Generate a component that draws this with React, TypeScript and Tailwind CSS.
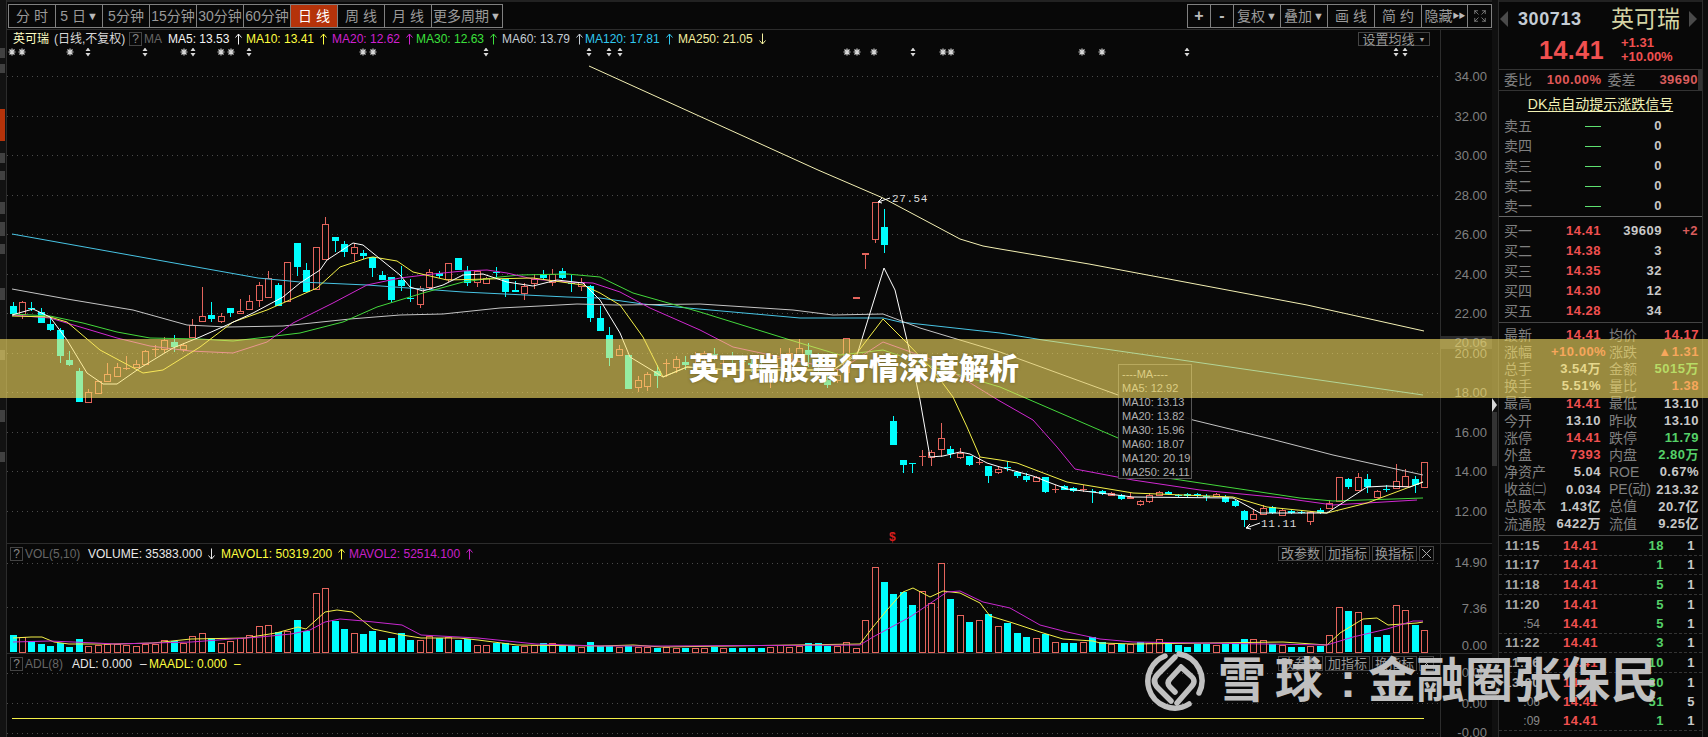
import { Expand } from "lucide-react";

type Candle = [number, number, number, number, number];

const RED = "#e4645c";
const CYAN = "#00ffff";

// kind (0 red, 1 cyan), high, body top, body bottom, low — page pixels
const candles: Candle[] = [
  [1, 302, 306, 314, 316], [0, 301, 302, 314, 319], [1, 302, 308, 308, 311], [1, 308, 312, 323, 323], [1, 317, 324, 330, 331],
  [1, 328, 330, 356, 363], [1, 351, 360, 365, 366], [1, 368, 371, 402, 402], [0, 389, 392, 402, 402], [0, 381, 381, 393, 393],
  [0, 363, 374, 381, 382], [0, 363, 367, 376, 377], [0, 356, 368, 368, 370], [0, 360, 364, 367, 368], [0, 350, 351, 364, 364],
  [0, 345, 349, 349, 357], [0, 337, 340, 349, 353], [1, 335, 342, 347, 352], [0, 343, 345, 349, 352], [0, 319, 325, 337, 337],
  [0, 287, 316, 321, 322], [1, 302, 315, 319, 322], [0, 313, 316, 321, 323], [1, 308, 308, 313, 317], [0, 299, 311, 313, 313],
  [0, 295, 301, 309, 310], [0, 282, 285, 300, 307], [0, 271, 278, 297, 298], [1, 283, 285, 306, 306], [0, 262, 262, 301, 301],
  [1, 243, 243, 267, 276], [1, 263, 270, 292, 292], [0, 247, 247, 289, 289], [0, 217, 224, 259, 259], [1, 237, 237, 241, 252],
  [1, 241, 244, 252, 257], [0, 243, 247, 253, 261], [1, 250, 253, 256, 259], [1, 257, 257, 268, 277], [1, 271, 275, 280, 280],
  [1, 277, 277, 300, 302], [1, 266, 280, 286, 291], [1, 279, 298, 298, 302], [0, 286, 288, 304, 308], [0, 269, 272, 287, 290],
  [1, 271, 273, 276, 278], [0, 263, 263, 279, 282], [1, 258, 258, 270, 270], [1, 266, 271, 283, 286], [0, 270, 271, 282, 287],
  [0, 277, 278, 283, 284], [1, 267, 272, 272, 278], [1, 279, 279, 292, 297], [1, 281, 290, 292, 292], [0, 283, 286, 293, 300],
  [0, 274, 279, 283, 289], [1, 270, 274, 278, 280], [0, 269, 274, 282, 286], [1, 268, 271, 278, 279], [1, 275, 283, 283, 292],
  [0, 278, 282, 286, 291], [1, 285, 286, 318, 322], [1, 306, 318, 331, 331], [1, 327, 335, 358, 366], [0, 345, 349, 355, 356],
  [1, 355, 355, 389, 389], [0, 376, 380, 387, 392], [0, 372, 374, 386, 391], [1, 365, 371, 376, 388], [0, 359, 363, 363, 377],
  [0, 356, 359, 367, 373], [1, 356, 362, 365, 370], [0, 352, 358, 358, 368], [0, 351, 353, 357, 364], [1, 348, 354, 354, 360],
  [0, 358, 363, 363, 372], [1, 352, 357, 357, 366], [1, 355, 361, 361, 370], [1, 358, 363, 365, 372], [1, 360, 366, 366, 376],
  [0, 366, 370, 370, 388], [0, 348, 358, 367, 368], [0, 348, 353, 363, 370], [0, 339, 348, 361, 362], [1, 343, 350, 355, 367],
  [1, 353, 361, 363, 372], [1, 375, 380, 385, 388], [0, 370, 375, 380, 383], [0, 338, 338, 372, 372], [0, 297, 297, 297, 297],
  [0, 253, 253, 253, 269], [0, 202, 202, 239, 243], [1, 209, 227, 245, 253], [1, 416, 421, 445, 445], [1, 460, 460, 465, 473],
  [1, 463, 463, 463, 473], [0, 450, 456, 456, 466], [0, 450, 452, 457, 466], [0, 423, 438, 449, 457], [1, 446, 449, 454, 458],
  [0, 448, 453, 457, 459], [1, 456, 456, 465, 466], [0, 457, 462, 462, 465], [1, 466, 466, 476, 483], [0, 467, 469, 472, 474],
  [1, 461, 467, 467, 471], [1, 471, 472, 476, 478], [1, 473, 476, 480, 482], [0, 476, 477, 481, 482], [1, 477, 477, 492, 493],
  [0, 485, 489, 489, 493], [1, 485, 486, 490, 490], [1, 487, 488, 491, 492], [0, 485, 489, 489, 492], [1, 489, 491, 491, 503],
  [1, 490, 491, 494, 495], [0, 492, 493, 495, 496], [1, 494, 495, 499, 500], [0, 493, 497, 498, 499], [0, 500, 501, 504, 506],
  [0, 493, 495, 501, 503], [0, 491, 492, 495, 496], [1, 491, 492, 494, 495], [1, 494, 495, 495, 497], [1, 493, 494, 496, 497],
  [1, 493, 494, 496, 497], [1, 494, 496, 496, 501], [0, 493, 494, 496, 497], [1, 495, 497, 502, 503], [1, 500, 501, 506, 507],
  [1, 510, 511, 520, 527], [0, 509, 514, 519, 520], [0, 505, 508, 514, 515], [1, 506, 507, 513, 514], [0, 509, 510, 515, 516],
  [1, 510, 511, 513, 514], [1, 511, 512, 513, 514], [0, 511, 512, 521, 525], [1, 508, 510, 513, 514], [0, 500, 503, 508, 509],
  [0, 477, 477, 501, 501], [1, 478, 479, 487, 489], [0, 473, 477, 490, 491], [1, 474, 479, 487, 493], [0, 490, 491, 497, 498],
  [1, 485, 489, 489, 492], [0, 464, 481, 488, 489], [0, 469, 476, 486, 487], [1, 476, 479, 485, 493], [0, 462, 462, 487, 487],
];

const volumes: number[] = [
  635, 637, 641, 644, 646, 643, 647, 639, 646, 645, 644, 644, 645, 646, 644, 644, 640, 641, 643, 636,
  633, 638, 643, 641, 638, 635, 626, 625, 632, 631, 620, 631, 593, 588, 621, 629, 633, 634, 631, 640,
  638, 633, 640, 640, 636, 638, 637, 640, 639, 645, 645, 643, 643, 646, 646, 645, 643, 643, 645, 645,
  647, 642, 646, 646, 647, 646, 647, 647, 648, 647, 648, 648, 648, 648, 647, 648, 648, 648, 648, 648,
  647, 645, 647, 646, 643, 643, 646, 646, 642, 648, 620, 567, 582, 594, 592, 605, 591, 603, 563, 599,
  615, 622, 620, 614, 626, 623, 633, 637, 638, 634, 642, 643, 643, 642, 637, 642, 644, 644, 644, 642,
  643, 639, 643, 645, 647, 644, 644, 645, 644, 644, 639, 639, 640, 644, 645, 647, 647, 646, 646, 635,
  607, 611, 612, 625, 637, 635, 605, 610, 625, 630,
];

// a few volume bars differ in colour from the candle of the same day
const volKind = (i: number) => (i === 23 || i === 119 || i === 144 ? (i === 23 ? 0 : 1) : candles[i][0]);

const cx = (i: number) => Math.round(12.5 + 9.473 * i);

const ma5 = "12,315 33,309 50,317 67,340 87,373 103,384 117,384 140,368 173,348 200,337 227,325 253,313 283,297 300,283 320,270 327,260 353,243 363,245 400,275 410,287 423,291 443,285 463,275 483,274 507,282 533,286 557,280 583,283 600,300 620,333 630,357 663,377 687,367 730,370 833,370 857,355 870,313 884,268 895,290 910,353 920,400 930,457 943,456 960,452 970,454 987,463 1000,467 1033,476 1048,482 1067,489 1133,497 1233,498 1260,513 1327,513 1367,487 1387,486 1410,487 1423,482";
const ma10 = "12,316 50,317 67,322 100,350 143,373 163,370 200,347 233,322 267,310 317,288 340,267 367,258 373,257 397,261 413,272 447,280 487,279 533,278 583,285 600,293 620,305 643,337 663,377 687,367 730,370 833,370 857,353 883,319 907,343 933,370 953,397 967,427 980,457 1000,460 1017,463 1067,482 1133,493 1233,497 1267,507 1327,513 1367,503 1423,482";
const ma20 = "12,315 50,318 117,338 150,346 190,351 233,353 267,342 293,323 333,303 367,285 400,278 433,274 463,271 487,270 507,273 533,279 567,282 593,283 620,292 650,308 700,330 733,347 840,370 883,342 933,360 998,400 1033,420 1057,447 1075,469 1133,480 1200,490 1283,498 1333,505 1417,500";
const ma30 = "12,314 50,316 83,323 117,332 150,338 200,339 233,341 267,337 300,333 343,322 377,307 423,293 463,282 500,277 520,275 567,274 600,277 633,293 700,312 800,343 840,355 883,350 933,367 1000,387 1118,438 1167,478 1300,498 1333,501 1423,498";
const ma60 = "12,289 67,299 133,310 187,325 227,327 283,326 350,319 400,315 443,314 500,308 540,306 577,304 617,305 700,304 793,310 833,315 883,314 920,328 1000,352 1118,395 1193,420 1267,438 1333,455 1423,475";
const ma120 = "12,234 258,278 300,282 367,285 463,292 567,297 600,298 643,304 800,318 883,318 900,322 1000,333 1043,340 1423,395";
const ma250 = "589,66 818,170 883,198 930,223 960,239 983,246 1000,249 1089,264 1307,305 1424,331";
const volMa1 = "13,638 31,637 42,637 54,642 69,644 115,644 153,643 191,639 245,638 276,633 298,627 306,629 325,612 337,610 352,612 373,629 402,635 421,638 459,638 478,640 517,645 600,646 633,645 662,647 860,644 873,627 887,610 903,592 913,588 930,597 943,591 960,593 980,603 990,616 1013,623 1040,632 1063,639 1093,641 1100,643 1133,644 1283,642 1327,645 1340,633 1363,619 1377,618 1388,625 1417,623 1423,622";
const volMa2 = "13,642 50,641 96,643 115,644 191,642 260,637 291,634 310,630 325,622 340,619 364,621 402,625 421,635 478,638 536,644 600,646 662,646 860,645 873,637 910,617 947,592 960,591 983,602 1010,608 1040,625 1067,632 1100,639 1133,642 1267,644 1327,645 1353,637 1387,629 1400,625 1413,621 1423,621";

const stars = [12, 22, 70, 221, 231, 184, 363, 373, 847, 857, 874, 943, 951, 1082, 1102];
const flags = [88, 145, 193, 249, 486, 589, 609, 620, 913, 1187, 1396, 1405];

const gridK = [34, 32, 30, 28, 26, 24, 22, 20, 18, 16, 14, 12].map((p) => 510.5 - (p - 12) * 19.75);

function Arrow({ color, down }: { color: string; down?: boolean }) {
  return (
    <svg width="7" height="12" viewBox="0 0 7 12" fill="none" stroke={color} strokeWidth="1" className="shrink-0">
      {down ? <path d="M3.5 0.5V11M0.5 7.5L3.5 11L6.5 7.5" /> : <path d="M3.5 11.5V1M0.5 4.5L3.5 1L6.5 4.5" />}
    </svg>
  );
}

function ToolButton({ children, w, active }: { children: React.ReactNode; w: string; active?: boolean }) {
  return (
    <div
      className={`flex h-full ${w} items-center justify-center border-r border-[#808080] text-[14px] whitespace-nowrap last:border-r-0 ${
        active ? "bg-[#b5330a] text-white" : "text-[#9a9a9a]"
      }`}
    >
      {children}
    </div>
  );
}

function Tri() {
  return <span className="ml-[1px] text-[11px] leading-none text-[#b8b8b8]">▼</span>;
}

function Toolbar() {
  return (
    <div className="flex h-[29px] items-start justify-between border-t-2 border-[#222] pt-[2px] pl-px">
      <div className="flex h-[24px] border border-[#808080]">
        <ToolButton w="w-[47px]">分&nbsp;时</ToolButton>
        <ToolButton w="w-[47px]">5&nbsp;日<Tri /></ToolButton>
        <ToolButton w="w-[47px]">5分钟</ToolButton>
        <ToolButton w="w-[47px]">15分钟</ToolButton>
        <ToolButton w="w-[47px]">30分钟</ToolButton>
        <ToolButton w="w-[47px]">60分钟</ToolButton>
        <ToolButton w="w-[47px]" active>日&nbsp;线</ToolButton>
        <ToolButton w="w-[47px]">周&nbsp;线</ToolButton>
        <ToolButton w="w-[47px]">月&nbsp;线</ToolButton>
        <ToolButton w="w-[70px]">更多周期<Tri /></ToolButton>
      </div>
      <div className="flex h-[24px] border border-[#808080]">
        <ToolButton w="w-[23px]"><span className="text-[16px] font-bold text-[#bbb]">+</span></ToolButton>
        <ToolButton w="w-[23px]"><span className="text-[16px] font-bold text-[#bbb]">-</span></ToolButton>
        <ToolButton w="w-[47px]">复权<Tri /></ToolButton>
        <ToolButton w="w-[47px]">叠加<Tri /></ToolButton>
        <ToolButton w="w-[47px]">画&nbsp;线</ToolButton>
        <ToolButton w="w-[47px]">简&nbsp;约</ToolButton>
        <ToolButton w="w-[46px]">隐藏<span className="text-[7px] tracking-[-1px] text-[#bbb]">▶▶</span></ToolButton>
        <ToolButton w="w-[23px]"><Expand size={14} strokeWidth={1.25} color="#999" /></ToolButton>
      </div>
    </div>
  );
}

function HelpBox() {
  return <span className="flex h-[14px] w-[13px] items-center justify-center border border-[#444] text-[12px] text-[#888]">?</span>;
}

function MaLabel({ w, color, children, down }: { w: string; color: string; children: string; down?: boolean }) {
  return (
    <span className={`flex ${w} items-center gap-[6px] text-[12px] whitespace-nowrap`} style={{ color }}>
      {children}
      <Arrow color={color} down={down} />
    </span>
  );
}

function Polyline({ points, color }: { points: string; color: string }) {
  return <polyline points={points} fill="none" stroke={color} strokeWidth={1} strokeLinejoin="round" />;
}

function Star({ x }: { x: number }) {
  return (
    <g stroke="#d8d8d8" strokeWidth="1.2">
      <path d={`M${x - 3.5} 52H${x + 3.5}M${x} 48.5V55.5M${x - 2.5} 49.5L${x + 2.5} 54.5M${x + 2.5} 49.5L${x - 2.5} 54.5`} />
    </g>
  );
}

function Flag({ x }: { x: number }) {
  return <path d={`M${x} 47.5L${x + 2.5} 51H${x - 2.5}ZM${x} 56.5L${x + 2.5} 53H${x - 2.5}Z`} fill="#d8d8d8" />;
}

function CandleMark({ c, i }: { c: Candle; i: number }) {
  const [kind, high, top, bot, low] = c;
  const x = cx(i);
  const color = kind ? CYAN : RED;
  return (
    <g shapeRendering="crispEdges">
      <line x1={x + 0.5} x2={x + 0.5} y1={high} y2={low} stroke={color} />
      {bot - top < 1 ? (
        <line x1={x - 3} x2={x + 4} y1={top + 0.5} y2={top + 0.5} stroke={color} strokeWidth={i === 89 || i === 90 ? 2 : 1} />
      ) : kind ? (
        <rect x={x - 3} y={top} width={7} height={bot - top} fill={CYAN} />
      ) : (
        <rect x={x - 3 + 0.5} y={top + 0.5} width={6} height={bot - top} fill="#080808" stroke={RED} />
      )}
    </g>
  );
}

function PriceChart() {
  return (
    <svg width="1433" height="495" viewBox="7 48 1433 495" className="block">
      {gridK.map((y) => (
        <line key={y} x1="7" x2="1440" y1={Math.round(y) + 0.5} y2={Math.round(y) + 0.5} stroke="#4a4a4a" strokeDasharray="1 4" />
      ))}
      {stars.map((x) => <Star key={x} x={x} />)}
      {flags.map((x) => <Flag key={x} x={x} />)}
      {candles.map((c, i) => <CandleMark key={i} c={c} i={i} />)}
      <Polyline points={ma250} color="#f4f0b4" />
      <Polyline points={ma120} color="#48c4e4" />
      <Polyline points={ma60} color="#c4c4c4" />
      <Polyline points={ma30} color="#44d83c" />
      <Polyline points={ma20} color="#d028d0" />
      <Polyline points={ma10} color="#f4f048" />
      <Polyline points={ma5} color="#ffffff" />
      <path d="M890 198L878 202M878 202L882 198M878 202L882 203M1260 523L1246 528M1246 528L1250 524M1246 528L1251 529" stroke="#fff" fill="none" />
      <text x="892" y="202" fill="#dcdcdc" fontSize="11" letterSpacing="0.6" fontFamily="'Liberation Mono', monospace">27.54</text>
      <text x="1261" y="527" fill="#dcdcdc" fontSize="11" letterSpacing="0.6" fontFamily="'Liberation Mono', monospace">11.11</text>
      <text x="889" y="541" fill="#d81e1e" fontSize="12" fontWeight="bold">$</text>
    </svg>
  );
}

function VolumeChart() {
  return (
    <svg width="1433" height="90" viewBox="7 563 1433 90" className="block">
      {[563.5, 607.5].map((y) => (
        <line key={y} x1="7" x2="1440" y1={y} y2={y} stroke="#4a4a4a" strokeDasharray="1 4" />
      ))}
      {volumes.map((top, i) =>
        volKind(i) ? (
          <rect key={i} x={cx(i) - 3} y={top} width={7} height={652 - top} fill={CYAN} shapeRendering="crispEdges" />
        ) : (
          <rect key={i} x={cx(i) - 2.5} y={top + 0.5} width={6} height={652 - top - 0.5} fill="#080808" stroke={RED} shapeRendering="crispEdges" />
        ),
      )}
      <Polyline points={volMa1} color="#f4f048" />
      <Polyline points={volMa2} color="#c828d0" />
    </svg>
  );
}

function AdlChart() {
  return (
    <svg width="1433" height="64" viewBox="7 673 1433 64" className="block">
      {[673.5, 703.5, 733.5].map((y) => (
        <line key={y} x1="7" x2="1440" y1={y} y2={y} stroke="#4a4a4a" strokeDasharray="1 4" />
      ))}
      <line x1="12" x2="1424" y1="718.5" y2="718.5" stroke="#f4f048" />
    </svg>
  );
}

function MiniButtons() {
  return (
    <div className="flex h-[15px] gap-[2px] text-[13px] leading-none text-[#999]">
      <span className="flex w-[45px] items-center justify-center border border-[#444]">改参数</span>
      <span className="flex w-[45px] items-center justify-center border border-[#444]">加指标</span>
      <span className="flex w-[45px] items-center justify-center border border-[#444]">换指标</span>
      <span className="flex w-[15px] items-center justify-center border border-[#444] text-[#aaa]">
        <svg width="9" height="9" viewBox="0 0 9 9" stroke="currentColor"><path d="M0 0L9 9M9 0L0 9" /></svg>
      </span>
    </div>
  );
}

function AxisTick({ children }: { children: string }) {
  return <div className="flex h-[39.5px] items-center justify-end pr-[5px] text-[13px] text-[#808080]">{children}</div>;
}

function KPanel() {
  const ticks = ["34.00", "32.00", "30.00", "28.00", "26.00", "24.00", "22.00", "20.00", "18.00", "16.00", "14.00", "12.00"];
  return (
    <section className="flex h-[514px] border-t border-[#2c2c2c]">
      <div className="relative w-[1433px]">
        <div className="flex h-[18px] items-center pl-[6px] text-[12px]">
          <span className="w-[41px] text-[#ffffc4]">英可瑞</span>
          <span className="w-[75px] text-[#d8d8d8]">(日线,不复权)</span>
          <HelpBox />
          <span className="ml-[2px] w-[24px] text-[#666]">MA</span>
          <MaLabel w="w-[78px]" color="#f4f4f4">MA5: 13.53</MaLabel>
          <MaLabel w="w-[86px]" color="#ffff40">MA10: 13.41</MaLabel>
          <MaLabel w="w-[84px]" color="#d020d0">MA20: 12.62</MaLabel>
          <MaLabel w="w-[86px]" color="#3ce03c">MA30: 12.63</MaLabel>
          <MaLabel w="w-[83px]" color="#c4ccd4">MA60: 13.79</MaLabel>
          <MaLabel w="w-[93px]" color="#30c8f0">MA120: 17.81</MaLabel>
          <MaLabel w="w-[90px]" color="#f4f0a0" down>MA250: 21.05</MaLabel>
          <span className="ml-auto mr-[10px] flex h-[14px] w-[72px] items-center justify-center gap-[4px] border border-[#444] text-[13px] leading-none text-[#999]">
            设置均线<span className="text-[7px] text-[#aaa]">▼</span>
          </span>
        </div>
        <PriceChart />
        <div className="absolute top-[334px] left-[1111px] flex h-[115px] w-[74px] flex-col border border-[#555] bg-[#0a0a0a]/95 pt-[2px] pl-[3px] text-[11px] leading-[14px] text-[#b0b0b0]">
          <span>----MA----</span>
          <span>MA5: 12.92</span>
          <span>MA10: 13.13</span>
          <span>MA20: 13.82</span>
          <span>MA30: 15.96</span>
          <span>MA60: 18.07</span>
          <span>MA120: 20.19</span>
          <span>MA250: 24.11</span>
        </div>
      </div>
      <div className="relative w-[52px] border-l border-[#2c2c2c] pt-[27px]">
        {ticks.map((t) => <AxisTick key={t}>{t}</AxisTick>)}
        <span className="absolute top-[306px] left-0 flex h-[13px] w-[51px] items-center justify-end bg-[#2c2c2c] pr-[5px] text-[13px] text-[#808080]">20.06</span>
      </div>
    </section>
  );
}

function VolPanel() {
  return (
    <section className="flex h-[110px] border-t border-[#2c2c2c]">
      <div className="w-[1433px]">
        <div className="flex h-[19px] items-center pl-[3px] text-[12px]">
          <HelpBox />
          <span className="ml-[2px] w-[63px] text-[#666]">VOL(5,10)</span>
          <span className="flex w-[133px] items-center gap-[6px] text-[#e8e8e8]">VOLUME: 35383.000<Arrow color="#e8e8e8" down /></span>
          <span className="flex w-[128px] items-center gap-[6px] text-[#ffff40]">MAVOL1: 50319.200<Arrow color="#ffff40" /></span>
          <span className="flex items-center gap-[6px] text-[#c820c8]">MAVOL2: 52514.100<Arrow color="#c820c8" /></span>
          <span className="mr-[6px] ml-auto"><MiniButtons /></span>
        </div>
        <VolumeChart />
      </div>
      <div className="flex w-[52px] flex-col items-end border-l border-[#2c2c2c] pr-[5px] text-[13px] leading-[16px] text-[#808080]">
        <span className="mt-[11px]">14.90</span>
        <span className="mt-[30px]">7.36</span>
        <span className="mt-[21px]">0.00</span>
      </div>
    </section>
  );
}

function AdlPanel() {
  return (
    <section className="flex h-[84px] border-t border-[#2c2c2c]">
      <div className="w-[1433px]">
        <div className="flex h-[19px] items-center pl-[3px] text-[12px]">
          <HelpBox />
          <span className="ml-[2px] w-[47px] text-[#666]">ADL(8)</span>
          <span className="w-[68px] text-[#e8e8e8]">ADL: 0.000</span>
          <span className="w-[9px] text-[#e8e8e8]">–</span>
          <span className="w-[85px] text-[#ffff40]">MAADL: 0.000</span>
          <span className="text-[#ffff40]">–</span>
          <span className="mr-[6px] ml-auto"><MiniButtons /></span>
        </div>
        <AdlChart />
      </div>
      <div className="flex w-[52px] flex-col items-end border-l border-[#2c2c2c] pr-[5px] text-[13px] leading-[16px] text-[#808080]">
        <span className="mt-[11px]">0.00</span>
        <span className="mt-[15px]">0.00</span>
        <span className="mt-[13px]">-0.00</span>
      </div>
    </section>
  );
}

const num = "font-bold text-[13px] tracking-[0.5px]";
const white = "text-[#c8c8c8]";
const red = "text-[#f05050]";
const green = "text-[#55d068]";

function BookRow({ label, price, vol, delta }: { label: string; price?: string; vol: string; delta?: string }) {
  return (
    <div className="flex h-[20px] items-center">
      <span className="w-[38px] text-[14px] text-[#808080]">{label}</span>
      <span className={`flex w-[59px] justify-end ${num} ${red}`}>
        {price ?? <span className="h-px w-[16px] bg-[#5ee070]" />}
      </span>
      <span className={`w-[61px] text-right ${num} ${white}`}>{vol}</span>
      {delta && <span className={`w-[36px] text-right ${num} text-[#d85c5c]`}>{delta}</span>}
    </div>
  );
}

type Stat = [string, string, string, string, string, string];

const stats: Stat[] = [
  ["最新", "14.41", red, "均价", "14.17", red],
  ["涨幅", "+10.00%", red, "涨跌", "▲1.31", red],
  ["总手", "3.54万", white, "金额", "5015万", green],
  ["换手", "5.51%", white, "量比", "1.38", red],
  ["最高", "14.41", red, "最低", "13.10", white],
  ["今开", "13.10", white, "昨收", "13.10", white],
  ["涨停", "14.41", red, "跌停", "11.79", green],
  ["外盘", "7393", red, "内盘", "2.80万", green],
  ["净资产", "5.04", white, "ROE", "0.67%", white],
  ["收益㈡", "0.034", white, "PE(动)", "213.32", white],
  ["总股本", "1.43亿", white, "总值", "20.7亿", white],
  ["流通股", "6422万", white, "流值", "9.25亿", white],
];

type Trade = [string, string, string, boolean];

const trades: Trade[] = [
  ["11:15", "18", "1", true],
  ["11:17", "1", "1", true],
  ["11:18", "5", "1", true],
  ["11:20", "5", "1", false],
  [":54", "5", "1", true],
  ["11:22", "3", "1", true],
  ["11:26", "10", "1", true],
  ["13:00", "30", "1", false],
  [":06", "51", "5", false],
  [":09", "1", "1", true],
];

function QuotePanel() {
  return (
    <aside className="flex h-[737px] w-[205px] flex-col overflow-hidden border-x border-[#2c2c2c] *:shrink-0">
      <div className="h-[69px] border-t-2 border-[#222]">
        <div className="flex h-[34px] items-center pl-[1px]">
          <svg width="8" height="16" viewBox="0 0 8 16" fill="#4a4a4a"><path d="M8 0V16L0 8Z" /></svg>
          <span className="ml-[10px] w-[93px] text-[18px] font-bold tracking-[0.6px] text-[#c4ccd4]">300713</span>
          <span className="w-[78px] text-[23px] leading-none text-[#d4d4a4]">英可瑞</span>
          <svg width="8" height="16" viewBox="0 0 8 16" fill="#4a4a4a"><path d="M0 0V16L8 8Z" /></svg>
        </div>
        <div className="flex items-center pl-[40px]">
          <span className="w-[82px] text-[25px] leading-none font-bold tracking-[0.5px] text-[#f05050]">14.41</span>
          <div className="flex flex-col text-[13px] leading-[14px] font-bold text-[#f05050]">
            <span>+1.31</span>
            <span>+10.00%</span>
          </div>
        </div>
      </div>
      <div className="flex h-[22px] items-center border-y border-[#333] pl-[5px]">
        <span className="w-[43px] text-[14px] text-[#808080]">委比</span>
        <span className={`w-[56px] ${num} text-[#e05858]`}>100.00%</span>
        <span className="ml-[5px] w-[42px] text-[14px] text-[#808080]">委差</span>
        <span className={`w-[49px] text-right ${num} text-[#d85c5c]`}>39690</span>
        <span className="ml-auto h-full w-[4px] bg-[#333]" />
      </div>
      <div className="flex h-[25px] items-center justify-center text-[14px] leading-none text-[#f0f0b4] underline underline-offset-2">
        DK点自动提示涨跌信号
      </div>
      <div className="border-b border-[#666] pl-[5px]">
        <BookRow label="卖五" vol="0" />
        <BookRow label="卖四" vol="0" />
        <BookRow label="卖三" vol="0" />
        <BookRow label="卖二" vol="0" />
        <BookRow label="卖一" vol="0" />
      </div>
      <div className="mt-[4px] border-b border-[#444] pb-px pl-[5px]">
        <BookRow label="买一" price="14.41" vol="39609" delta="+2" />
        <BookRow label="买二" price="14.38" vol="3" />
        <BookRow label="买三" price="14.35" vol="32" />
        <BookRow label="买四" price="14.30" vol="12" />
        <BookRow label="买五" price="14.28" vol="34" />
      </div>
      <div className="mt-[3px] flex flex-col pl-[5px]">
        {stats.map(([l1, v1, c1, l2, v2, c2]) => (
          <div key={l1} className="flex h-[17.2px] items-center">
            <span className="w-[47px] text-[14px] leading-none whitespace-nowrap text-[#808080]">{l1}</span>
            <span className={`w-[50px] text-right ${num} ${c1} whitespace-nowrap`}>{v1}</span>
            <span className="ml-[8px] w-[38px] text-[14px] leading-none whitespace-nowrap text-[#808080]">{l2}</span>
            <span className={`w-[52px] text-right ${num} ${c2} whitespace-nowrap`}>{v2}</span>
          </div>
        ))}
      </div>
      <div className="mt-[3px] flex flex-col border-t border-[#444]">
        {trades.map(([t, v, n, dash]) => (
          <div key={t} className={`flex h-[19.5px] items-center pl-[5px] ${dash ? "border-b border-dashed border-[#333]" : ""}`}>
            <span className={`w-[36px] text-right ${t.length > 3 ? `${num} text-[#a8a8a8]` : "text-[12px] text-[#888]"}`}>{t}</span>
            <span className={`ml-[23px] w-[35px] ${num} ${red}`}>14.41</span>
            <span className={`w-[66px] text-right ${num} ${green}`}>{v}</span>
            <span className={`w-[31px] text-right ${num} ${white}`}>{n}</span>
          </div>
        ))}
      </div>
    </aside>
  );
}

// the window edge cuts the vertical tabs to a sliver, so only their ticks show
function SideTab({ h, mt, active }: { h: string; mt: string; active?: boolean }) {
  return <div className={`${h} ${mt} w-[5px] ${active ? "bg-[#b5330a]" : "bg-[#555]/70"}`} />;
}

function LeftStrip() {
  return (
    <div className="flex w-[7px] flex-col border-r border-[#2c2c2c] bg-[#121212]">
      <SideTab h="h-[10px]" mt="mt-[48px]" />
      <SideTab h="h-[9px]" mt="mt-[6px]" />
      <SideTab h="h-[32px]" mt="mt-[36px]" active />
      <SideTab h="h-[10px]" mt="mt-[12px]" />
      <SideTab h="h-[9px]" mt="mt-[8px]" />
      <SideTab h="h-[12px]" mt="mt-[22px]" />
      <SideTab h="h-[14px]" mt="mt-[8px]" />
      <SideTab h="h-[10px]" mt="mt-[8px]" />
      <SideTab h="h-[12px]" mt="mt-[34px]" />
      <SideTab h="h-[10px]" mt="mt-[50px]" />
      <SideTab h="h-[12px]" mt="mt-[50px]" />
      <SideTab h="h-[10px]" mt="mt-[30px]" />
    </div>
  );
}

function XueqiuMark() {
  return (
    <svg width="60" height="60" viewBox="0 0 60 60" fill="none" stroke="#c0c0c0" strokeWidth="5.5" strokeLinecap="round" strokeLinejoin="round">
      <path d="M34 3A27 27 0 0 1 54 42M44 53A27 27 0 0 1 4 38A27 27 0 0 1 20 5" />
      <path d="M30 6L13 23Q6 30 13 37L26 50" />
      <path d="M36 16L25 28Q21 32 25 36L30 41M36 16L46 25Q52 30 46 36L32 52" />
    </svg>
  );
}

export default function App() {
  return (
    <div className="relative flex h-[737px] w-[1708px] overflow-hidden bg-[#080808] font-['Liberation_Sans','Noto_Sans_CJK_SC',sans-serif]">
      <LeftStrip />
      <main className="flex w-[1485px] flex-col *:shrink-0">
        <Toolbar />
        <KPanel />
        <VolPanel />
        <AdlPanel />
      </main>
      <div className="flex w-[6px] flex-col bg-[#101010] pt-[398px]">
        <svg width="5" height="14" viewBox="0 0 5 14" fill="#d8d8d8"><path d="M0 0L5 7L0 14Z" /></svg>
        <div className="h-[54px] w-[5px] bg-[#333]" />
      </div>
      <QuotePanel />
      <div className="w-[5px] bg-[#0c0c0c]" />

      {/* banner over the screenshot */}
      <div className="absolute top-[339px] left-0 flex h-[59px] w-full items-center justify-center bg-[#fae164]/60">
        <h1 className="text-[30px] leading-none font-black text-white [text-shadow:0_0_3px_rgba(60,50,10,0.5)]">
          英可瑞股票行情深度解析
        </h1>
      </div>

      {/* watermark */}
      <div className="absolute top-[651px] left-[1145px] flex items-center text-[48px] leading-[60px] font-bold whitespace-nowrap text-[#c0c0c0]">
        <XueqiuMark />
        <span className="ml-[13px] tracking-[9px]">雪球</span>
        <span className="ml-[8px] w-[28px]">:</span>
        <span className="tracking-[0.5px]">金融圈张保民</span>
      </div>
    </div>
  );
}
